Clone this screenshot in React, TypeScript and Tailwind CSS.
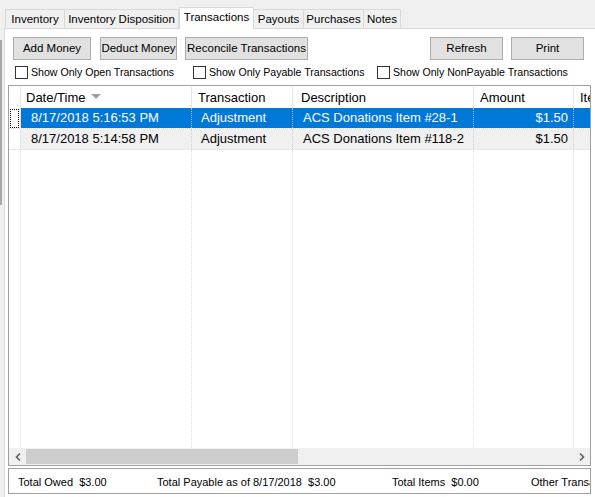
import React from 'react';

const tabs = [
  { label: 'Inventory', w: 'w-[60px]' },
  { label: 'Inventory Disposition', w: 'w-[114px]' },
  { label: 'Transactions', w: 'w-[75px]', active: true },
  { label: 'Payouts', w: 'w-[50px]' },
  { label: 'Purchases', w: 'w-[60px]' },
  { label: 'Notes', w: 'w-[37px]' },
];

const rows = [
  { date: '8/17/2018 5:16:53 PM', type: 'Adjustment', desc: 'ACS Donations Item #28-1', amount: '$1.50', selected: true },
  { date: '8/17/2018 5:14:58 PM', type: 'Adjustment', desc: 'ACS Donations Item #118-2', amount: '$1.50' },
];

const Btn = ({ label, w }: { label: string; w: string }) => (
  <button className={`${w} h-[23px] bg-[#e1e1e1] border border-[#adadad] text-[11.5px] text-black flex items-center justify-center pt-[1px] whitespace-nowrap`}>
    {label}
  </button>
);

const Check = ({ label, w }: { label: string; w: string }) => (
  <label className={`${w} flex items-center gap-[3px] text-[10.6px] text-black whitespace-nowrap`}>
    <span className="w-[13px] h-[13px] border border-[#333] bg-white shrink-0" />
    <span>{label}</span>
  </label>
);

export default function App() {
  return (
    <div
      className="w-[595px] h-[497px] bg-[#f0f0f0] overflow-hidden flex"
      style={{ fontFamily: '"Liberation Sans", Arial, sans-serif' }}
    >
      {/* neighbouring splitter edge */}
      <div className="w-[4px] shrink-0 flex flex-col">
        <div className="h-[40px]" />
        <div className="w-[2px] h-[165px] bg-[#a8a8a8]" />
      </div>

      <div className="flex-1 flex flex-col min-w-0">
        {/* tab strip */}
        <div className="h-[28px] flex items-end pl-[1px]">
          {tabs.map((t) =>
            t.active ? (
              <div
                key={t.label}
                className={`${t.w} h-[22px] bg-white border border-b-0 border-[#d9d9d9] text-[11.5px] flex items-center justify-center pb-[1px] -mb-[1px] relative z-10 whitespace-nowrap`}
              >
                {t.label}
              </div>
            ) : (
              <div
                key={t.label}
                className={`${t.w} h-[19px] bg-[#f0f0f0] border border-b-0 border-l-0 first:border-l border-[#d9d9d9] text-[11.5px] flex items-center justify-center pt-[1px] whitespace-nowrap`}
              >
                {t.label}
              </div>
            )
          )}
        </div>

        {/* tab page */}
        <div className="flex-1 bg-white border-t border-l border-[#d9d9d9] flex flex-col">
          <div className="h-[8px] shrink-0" />
          <div className="flex items-center pl-[8px] pr-[11px] shrink-0">
            <div className="flex gap-[9px]">
              <Btn label="Add Money" w="w-[78px]" />
              <div className="flex gap-[8px]">
                <Btn label="Deduct Money" w="w-[77px]" />
                <Btn label="Reconcile Transactions" w="w-[123px]" />
              </div>
            </div>
            <div className="flex-1" />
            <div className="flex gap-[8px]">
              <Btn label="Refresh" w="w-[73px]" />
              <Btn label="Print" w="w-[73px]" />
            </div>
          </div>

          <div className="flex items-center pl-[10px] h-[25px] pt-[1px] shrink-0">
            <Check label="Show Only Open Transactions" w="w-[178px]" />
            <Check label="Show Only Payable Transactions" w="w-[184px]" />
            <Check label="Show Only NonPayable Transactions" w="w-[200px]" />
          </div>

          {/* grid */}
          <div className="ml-[3px] w-[583px] h-[381px] shrink-0 border border-[#a0a0a0] flex flex-col text-[13px] whitespace-nowrap overflow-hidden">
            <div className="h-[22px] shrink-0 flex items-stretch bg-white pt-[1px]">
              <div className="w-[12px] border-r border-[#e5e5e5]" />
              <div className="w-[171px] border-r border-[#e5e5e5] flex items-center pl-[5px]">
                Date/Time
                <svg width="10" height="6" viewBox="0 0 10 6" className="ml-[6px] mt-[-2px]">
                  <path d="M0 0 L10 0 L5 5 Z" fill="#a0a0a0" />
                </svg>
              </div>
              <div className="w-[101px] border-r border-[#e5e5e5] flex items-center pl-[6px]">Transaction</div>
              <div className="w-[181px] border-r border-[#e5e5e5] flex items-center pl-[8px]">Description</div>
              <div className="w-[100px] border-r border-[#e5e5e5] flex items-center pl-[6px]">Amount</div>
              <div className="w-[16px] flex items-center pl-[6px] overflow-hidden">Item</div>
            </div>

            {rows.map((r) => (
              <div
                key={r.date}
                className={`h-[21px] shrink-0 flex items-stretch ${r.selected ? 'text-white' : 'text-black bg-[#f0f0f0]'} border-b border-dotted border-[#e0e0e0]`}
              >
                <div className="w-[12px] bg-white border-r border-[#e5e5e5] flex items-center justify-center">
                  {r.selected && <span className="w-[9px] h-[19px] border border-dotted border-black" />}
                </div>
                <div className={`w-[171px] border-r border-dotted ${r.selected ? 'bg-[#0078d7] border-[#9cc6ee]' : 'border-[#d0d0d0]'} flex items-center pl-[10px]`}>{r.date}</div>
                <div className={`w-[101px] border-r border-dotted ${r.selected ? 'bg-[#0078d7] border-[#9cc6ee]' : 'border-[#d0d0d0]'} flex items-center pl-[9px]`}>{r.type}</div>
                <div className={`w-[181px] border-r border-dotted ${r.selected ? 'bg-[#0078d7] border-[#9cc6ee]' : 'border-[#d0d0d0]'} flex items-center pl-[10px]`}>{r.desc}</div>
                <div className={`w-[100px] border-r border-dotted ${r.selected ? 'bg-[#0078d7] border-[#9cc6ee]' : 'border-[#d0d0d0]'} flex items-center justify-end pr-[5px]`}>{r.amount}</div>
                <div className={`w-[16px] ${r.selected ? 'bg-[#0078d7]' : ''}`} />
              </div>
            ))}

            <div className="flex-1 flex items-stretch bg-white">
              <div className="w-[12px] border-r border-dotted border-[#e0e0e0]" />
              <div className="w-[171px] border-r border-dotted border-[#e0e0e0]" />
              <div className="w-[101px] border-r border-dotted border-[#e0e0e0]" />
              <div className="w-[181px] border-r border-dotted border-[#e0e0e0]" />
              <div className="w-[100px] border-r border-dotted border-[#e0e0e0]" />
              <div className="flex-1" />
            </div>

            {/* horizontal scrollbar */}
            <div className="h-[17px] shrink-0 bg-[#f0f0f0] flex items-stretch">
              <div className="w-[17px] flex items-center justify-center">
                <svg width="6" height="8" viewBox="0 0 6 8">
                  <path d="M5 0.5 L1.5 4 L5 7.5" stroke="#606060" strokeWidth="1.6" fill="none" />
                </svg>
              </div>
              <div className="flex-1 flex items-stretch py-[1px]">
                <div className="w-[272px] bg-[#cdcdcd]" />
              </div>
              <div className="w-[17px] flex items-center justify-center">
                <svg width="6" height="8" viewBox="0 0 6 8">
                  <path d="M1 0.5 L4.5 4 L1 7.5" stroke="#606060" strokeWidth="1.6" fill="none" />
                </svg>
              </div>
            </div>
          </div>

          {/* footer totals */}
          <div className="ml-[3px] mt-[2px] w-[583px] h-[26px] shrink-0 border border-[#a0a0a0] flex items-center pt-[2px] text-[11px] whitespace-nowrap overflow-hidden">
            <span className="w-[148px] shrink-0 pl-[9px]">Total Owed&nbsp;&nbsp;$3.00</span>
            <span className="w-[235px] shrink-0">Total Payable as of 8/17/2018&nbsp;&nbsp;$3.00</span>
            <span className="w-[139px] shrink-0">Total Items&nbsp;&nbsp;$0.00</span>
            <span className="shrink-0">Other Transactions</span>
          </div>
        </div>
      </div>
    </div>
  );
}
